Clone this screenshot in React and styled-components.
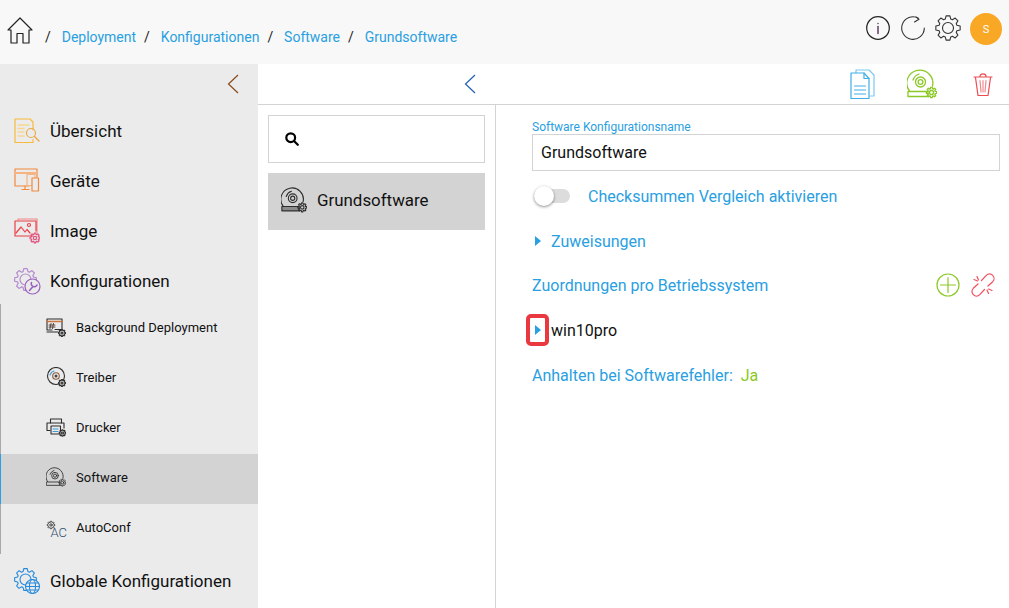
import styled, { createGlobalStyle } from "styled-components";

const BLUE = "#29a0e1";
const LINE = "#d3d3d3";

const GlobalStyle = createGlobalStyle`
  html, body {
    margin: 0;
    padding: 0;
    height: 100%;
    overflow: hidden;
    background: #fff;
    font-family: Roboto, "Liberation Sans", sans-serif;
  }
  #root { height: 100%; }
  * { box-sizing: border-box; }
`;

// cog outline used all over the icon set
function gearPath(cx, cy, ro, ri, teeth) {
  const pts = [];
  const step = (Math.PI * 2) / teeth;
  for (let i = 0; i < teeth; i++) {
    const a = i * step - Math.PI / 2;
    const w = step * 0.2;
    const p = [
      [ri, a - step / 2 + w * 0.6],
      [ro, a - w],
      [ro, a + w],
      [ri, a + step / 2 - w * 0.6],
    ];
    p.forEach(([r, t]) => pts.push(`${(cx + r * Math.cos(t)).toFixed(2)} ${(cy + r * Math.sin(t)).toFixed(2)}`));
  }
  return `M${pts.join("L")}Z`;
}

const Icon = ({ size = 26, h, color = "#333", width = 1, children }) => (
  <svg width={size} height={h || size} viewBox={`0 0 ${size} ${h || size}`} fill="none" stroke={color} strokeWidth={width} strokeLinejoin="round" strokeLinecap="round">
    {children}
  </svg>
);

const HomeIcon = () => (
  <Icon size={26} h={28} color="#222" width={1.2}>
    <path d="M1 13 13 1l12 12h-3v13h-6v-9.500h-6V26H4V13Z" />
  </Icon>
);

const InfoIcon = () => (
  <Icon size={24} color="#222" width={1.2}>
    <circle cx="12" cy="12" r="11.300" />
    <path d="M12 10.500v7" strokeWidth="1.300" stroke="#4a1f4f" />
    <circle cx="12" cy="7.500" r=".7" fill="#333" stroke="none" />
  </Icon>
);

const RefreshIcon = () => (
  <Icon size={24} color="#333" width={1.1}>
    <path d="M17.500 2.200A11.300 11.300 0 1 0 23.300 12" />
    <path d="M13.500 6 18 3.300 15 .8" />
  </Icon>
);

const GearIcon = () => (
  <Icon size={26} color="#333" width={1.1}>
    <path d={gearPath(13, 13, 12.300, 9.300, 8)} />
    <circle cx="13" cy="13" r="5.500" />
  </Icon>
);

const DocsIcon = () => (
  <Icon size={26} h={31} color="#3fade8" width={1.2}>
    <path d="M6 4V1h13l5 5v21h-4" stroke="#7cc8f0" />
    <path d="M1 4h13l5 5.500V29.500H1Z" />
    <path d="M14 4v5.500h5" />
    <path d="M4.500 17h11M4.500 21h11M4.500 25h11" />
  </Icon>
);

const DiscIcon = ({ color, gearColor, barFill = "none", size = 30 }) => (
  <svg width={size} height={size} viewBox="0 0 30 30" fill="none" stroke={color} strokeWidth="1.300" strokeLinecap="round" strokeLinejoin="round">
    <path d="M2.500 22A13 13 0 1 1 25.500 17" />
    <path d="M6 11a9.500 9.500 0 0 1 6-6" />
    <circle cx="13.500" cy="13" r="5" />
    <circle cx="13.500" cy="13" r="2.400" />
    <rect x="1" y="22.500" width="20" height="5" fill={barFill} />
    <path d={gearPath(24.500, 23.500, 5.200, 3.800, 8)} stroke={gearColor || color} />
    <circle cx="24.500" cy="23.500" r="2" stroke={gearColor || color} />
  </svg>
);

const TrashIcon = () => (
  <Icon size={20} h={26} color="#ee4a52" width={1.2}>
    <path d="M1 6h18M7 5.500C7 2 13 2 13 5.500" />
    <path d="M2.500 6.500 5 24.500h10l2.500-18" />
    <path d="M7 9.500 8 21M10 9.500V21M13 9.500 12 21" stroke="#f08a90" />
  </Icon>
);

const PlusCircleIcon = () => (
  <Icon size={24} color="#8cc927" width={1.2}>
    <circle cx="12" cy="12" r="11" />
    <path d="M12 4.500v15M4.500 12h15" />
  </Icon>
);

const UnlinkIcon = () => (
  <Icon size={24} color="#f0505e" width={1.2}>
    <path d="M10.500 7.500 15.300 2.300A4.500 4.500 0 0 1 21.700 8.700L17 13" />
    <path d="M13.500 16.500 8.700 21.700A4.500 4.500 0 0 1 2.300 15.300L7 11" />
    <path d="M6 3.500 7.500 7M3 6.500 6.500 8M17.500 20.500 16 17M21 17.500 17.500 16" />
  </Icon>
);

const OverviewIcon = () => (
  <Icon size={26} color="#f9b93a" width={1.2}>
    <path d="M1 1h15l3 3v8M19 21.500v3H1V1" />
    <path d="M4 7h11M4 10.500h6M4 14h6M4 18h6" stroke="#f9d78f" strokeWidth="1.500" />
    <circle cx="17" cy="15" r="4.500" stroke="#e8ab48" />
    <path d="m20.500 18.500 4.500 4.500" stroke="#e8ab48" strokeWidth="1.400" />
  </Icon>
);

const DevicesIcon = () => (
  <Icon size={26} color="#f2893c" width={1.2}>
    <path d="M15 18H1V1h22v8" />
    <path d="M1 5h22" strokeWidth="1.800" stroke="#f6b483" />
    <path d="M8 21.500h7M11 18v3" />
    <rect x="13" y="6.500" width="8" height="11" stroke="#f6b483" />
    <rect x="18" y="10" width="6.500" height="13" fill="#ebebeb" />
  </Icon>
);

const ImageIcon = () => (
  <Icon size={26} color="#ec3f45" width={1.2}>
    <path d="M4 2V1h19v14" stroke="#f08a8e" />
    <path d="M19 18H1V3h21v10" />
    <path d="m2 15 5-6 4 5 2-2.500 3 3.500" />
    <circle cx="15" cy="7" r="1.500" />
    <path d={gearPath(21, 20, 5, 3.600, 8)} stroke="#e0527d" />
    <circle cx="21" cy="20" r="1.600" stroke="#e0527d" />
  </Icon>
);

const ConfigIcon = () => (
  <Icon size={27} color="#9a62bd" width={1.2}>
    <path d={gearPath(11.500, 11.500, 11, 8.300, 8)} stroke="#b58cce" />
    <circle cx="11.500" cy="11.500" r="5.500" stroke="#b58cce" />
    <circle cx="18.500" cy="18.500" r="7.500" fill="#ebebeb" />
    <path d="M15.500 22.500 19 18.500M17.500 14.500a3 3 0 0 0 1.500 4 3 3 0 0 0 4-1.500" strokeWidth="1.600" />
  </Icon>
);

const GlobalIcon = () => (
  <Icon size={27} color="#2389dc" width={1.1}>
    <path d={gearPath(11.500, 11.500, 11, 8.300, 8)} />
    <circle cx="11.500" cy="11.500" r="5.500" />
    <circle cx="18.500" cy="18.500" r="7" fill="#ebebeb" />
    <ellipse cx="18.500" cy="18.500" rx="3" ry="7" />
    <path d="M11.500 18.500h14M12.500 15h12M12.500 22h12" />
  </Icon>
);

const BackgroundIcon = () => (
  <Icon size={20} color="#2e2e2e" width={1.1}>
    <path d="M1 2h15v10.500H9M1 2v11h5" />
    <path d="M1 4.500h15" strokeWidth="1.600" stroke="#c9763f" />
    <path d="M5 6.500 4 11.500M7.500 6.500l-1 5M3 8h6M3 10h6" stroke="#5a4a40" />
    <path d="M1 15h11" />
    <path d={gearPath(16, 16, 3.500, 2.500, 8)} />
    <circle cx="16" cy="16" r="1" />
  </Icon>
);

const DriverIcon = () => (
  <Icon size={20} color="#2e2e2e" width={1.1}>
    <circle cx="10" cy="9" r="8.500" />
    <path d="M4 8a6 6 0 0 1 4-4" stroke="#3d9ad6" />
    <circle cx="10" cy="9" r="3.300" stroke="#8a5a3a" />
    <circle cx="10" cy="9" r="1.500" fill="#444" stroke="none" />
    <path d={gearPath(16, 16, 3.500, 2.500, 8)} fill="#ebebeb" />
    <circle cx="16" cy="16" r="1" />
  </Icon>
);

const PrinterIcon = () => (
  <Icon size={20} color="#2e2e2e" width={1.1}>
    <path d="M4.500 6V2h11v4" />
    <path d="M4 13.500H1V6h17v5" />
    <path d="M5 9h9.500v8H5Z" fill="#ebebeb" />
    <path d="M7 12h5M7 14.500h5" stroke="#3d9ad6" />
    <path d={gearPath(16.500, 16, 3.300, 2.400, 8)} fill="#ebebeb" />
    <circle cx="16.500" cy="16" r="1" />
  </Icon>
);

const AutoConfIcon = () => (
  <Icon size={24} h={28} color="#444">
    <path d={gearPath(5, 12, 3.800, 2.800, 8)} />
    <circle cx="5" cy="12" r="1.200" />
    <text x="4.500" y="23.500" fontFamily="Roboto" fontSize="13" fontWeight="300" fill="#2f4f6d" stroke="none">AC</text>
  </Icon>
);

const SearchGlyph = () => (
  <svg width="14" height="14" viewBox="0 0 14 14" fill="none" stroke="#000" strokeWidth="2.200" strokeLinecap="round">
    <circle cx="5.700" cy="5.700" r="4.400" />
    <path d="m9 9 3.800 3.800" />
  </svg>
);

const Chevron = ({ color }) => (
  <svg width="12" height="20" viewBox="0 0 12 20" fill="none" stroke={color} strokeWidth="1.200">
    <path d="M11 1 1.500 10 11 19" />
  </svg>
);

const App = () => (
  <Page>
    <GlobalStyle />
    <Header>
      <HomeLink><HomeIcon /></HomeLink>
      <Crumbs>
        {["Deployment", "Konfigurationen", "Software", "Grundsoftware"].map((c) => (
          <Crumb key={c}><Slash>/</Slash><a>{c}</a></Crumb>
        ))}
      </Crumbs>
      <HeaderTools>
        <InfoIcon />
        <RefreshIcon />
        <GearSlot><GearIcon /></GearSlot>
        <Avatar>S</Avatar>
      </HeaderTools>
    </Header>
    <Body>
      <Sidebar>
        <CollapseRow><Chevron color="#8a4a1a" /></CollapseRow>
        <NavItem><IconSlot><OverviewIcon /></IconSlot>Übersicht</NavItem>
        <NavItem><IconSlot><DevicesIcon /></IconSlot>Geräte</NavItem>
        <NavItem><IconSlot><ImageIcon /></IconSlot>Image</NavItem>
        <NavItem><IconSlot><ConfigIcon /></IconSlot>Konfigurationen</NavItem>
        <SubList>
          <SubItem><BackgroundIcon />Background Deployment</SubItem>
          <SubItem><DriverIcon />Treiber</SubItem>
          <SubItem><PrinterIcon />Drucker</SubItem>
          <SubItem $active><DiscIcon color="#2e2e2e" size={20} />Software</SubItem>
          <SubItem><AutoConfSlot><AutoConfIcon /></AutoConfSlot>AutoConf</SubItem>
        </SubList>
        <NavItem><IconSlot><GlobalIcon /></IconSlot>Globale Konfigurationen</NavItem>
      </Sidebar>
      <Main>
        <Toolbar>
          <Chevron color="#1f5fb4" />
          <ToolbarActions>
            <DocsIcon />
            <DiscIcon color="#8cc927" />
            <TrashSlot><TrashIcon /></TrashSlot>
          </ToolbarActions>
        </Toolbar>
        <Columns>
          <ListPanel>
            <SearchBox><SearchGlyph /></SearchBox>
            <ListEntry>
              <DiscIcon color="#2e2e2e" barFill="#8c8c8c" size={26} />
              Grundsoftware
            </ListEntry>
          </ListPanel>
          <Detail>
            <FieldLabel>Software Konfigurationsname</FieldLabel>
            <NameInput>Grundsoftware</NameInput>
            <ToggleRow>
              <Toggle />
              <BlueText>Checksummen Vergleich aktivieren</BlueText>
            </ToggleRow>
            <ExpandRow>
              <Arrow />
              <BlueText>Zuweisungen</BlueText>
            </ExpandRow>
            <HeadingRow>
              <BlueText>Zuordnungen pro Betriebssystem</BlueText>
              <HeadingTools>
                <PlusCircleIcon />
                <UnlinkIcon />
              </HeadingTools>
            </HeadingRow>
            <OsRow>
              <Marker><Arrow /></Marker>
              win10pro
            </OsRow>
            <StatusRow>
              <BlueText>Anhalten bei Softwarefehler:</BlueText>
              <YesText>Ja</YesText>
            </StatusRow>
          </Detail>
        </Columns>
      </Main>
    </Body>
  </Page>
);

export default App;

const Page = styled.div`
  display: flex;
  flex-direction: column;
  height: 608px;
  overflow: hidden;
`;

const Header = styled.header`
  height: 64px;
  flex: none;
  display: flex;
  align-items: center;
  background: #f8f8f8;
  padding-left: 7px;
`;

const HomeLink = styled.a`
  display: flex;
  margin-top: -2px;
`;

const Crumbs = styled.nav`
  display: flex;
  align-items: center;
  gap: 8px;
  margin-left: 12px;
  margin-top: 10px;
  font-size: 14px;
  color: ${BLUE};
`;

const Crumb = styled.span`
  display: flex;
  align-items: center;
`;

const Slash = styled.span`
  color: #222;
  width: 16.700px;
`;

const HeaderTools = styled.div`
  margin-left: auto;
  display: flex;
  align-items: center;
  gap: 11px;
  padding: 0 7px 8px 0;
`;

const GearSlot = styled.span`
  display: flex;
  margin-left: -1px;
`;

const Avatar = styled.div`
  width: 32px;
  height: 32px;
  border-radius: 50%;
  background: #f9a825;
  color: #fff;
  font-size: 11px;
  display: flex;
  align-items: center;
  justify-content: center;
  margin-top: 2px;
  margin-left: -2px;
`;

const Body = styled.div`
  flex: 1;
  display: flex;
  min-height: 0;
`;

const Sidebar = styled.aside`
  width: 258px;
  flex: none;
  background: #ebebeb;
  display: flex;
  flex-direction: column;
`;

const CollapseRow = styled.div`
  height: 42px;
  flex: none;
  display: flex;
  align-items: center;
  justify-content: flex-end;
  padding-right: 19px;
  padding-bottom: 2px;
`;

const NavItem = styled.div`
  height: 50px;
  flex: none;
  display: flex;
  align-items: center;
  font-size: 17px;
  color: #111;
`;

const IconSlot = styled.span`
  width: 50px;
  flex: none;
  display: flex;
  justify-content: center;
  padding: 0 6px 0 10px;
`;

const SubList = styled.div`
  margin-top: -2px;
  margin-bottom: 2px;
  border-left: 1px solid #a9a9a9;
`;

const SubItem = styled.div`
  height: 50px;
  display: flex;
  align-items: center;
  gap: 10px;
  padding: 0 0 4px 45px;
  font-size: 13px;
  color: #111;
  background: ${(p) => (p.$active ? "#d3d3d3" : "transparent")};
  box-shadow: ${(p) => (p.$active ? `-1px 0 0 ${BLUE}` : "none")};
`;

const AutoConfSlot = styled.span`
  display: flex;
  margin-right: -4px;
`;

const Main = styled.main`
  flex: 1;
  min-width: 0;
  display: flex;
  flex-direction: column;
`;

const Toolbar = styled.div`
  height: 41px;
  flex: none;
  display: flex;
  align-items: center;
  padding-left: 206px;
  border-bottom: 1px solid ${LINE};
`;

const ToolbarActions = styled.div`
  margin-left: auto;
  display: flex;
  align-items: center;
  gap: 31px;
  padding-right: 16px;
`;

const TrashSlot = styled.span`
  display: flex;
  margin-left: 5px;
`;

const Columns = styled.div`
  flex: 1;
  display: flex;
  min-height: 0;
`;

const ListPanel = styled.div`
  width: 238px;
  flex: none;
  padding: 10px 10px 0;
  border-right: 1px solid ${LINE};
`;

const SearchBox = styled.div`
  height: 48px;
  border: 1px solid ${LINE};
  display: flex;
  align-items: center;
  padding-left: 16px;
`;

const ListEntry = styled.div`
  height: 57px;
  margin-top: 10px;
  background: ${LINE};
  display: flex;
  align-items: center;
  gap: 10px;
  padding: 0 0 3px 13px;
  font-size: 16.900px;
  color: #111;
`;

const Detail = styled.div`
  flex: 1;
  padding: 16px 9px 0 36px;
`;

const FieldLabel = styled.div`
  font-size: 12px;
  line-height: 13px;
  color: ${BLUE};
`;

const NameInput = styled.div`
  height: 37px;
  border: 1px solid ${LINE};
  display: flex;
  align-items: center;
  padding-left: 8px;
  font-size: 16px;
  color: #111;
`;

const BlueText = styled.span`
  font-size: 16px;
  color: ${BLUE};
`;

const ToggleRow = styled.div`
  height: 26px;
  margin-top: 12px;
  display: flex;
  align-items: center;
  gap: 18px;
  padding-left: 2px;
`;

const Toggle = styled.span`
  position: relative;
  width: 36px;
  height: 14px;
  border-radius: 7px;
  background: #dcdcdc;
  &::before {
    content: "";
    position: absolute;
    left: 0;
    top: -3px;
    width: 20px;
    height: 20px;
    border-radius: 50%;
    background: #fff;
    box-shadow: 0 1px 3px rgba(0, 0, 0, 0.45);
  }
`;

const ExpandRow = styled.div`
  height: 24px;
  margin-top: 20px;
  display: flex;
  align-items: center;
  gap: 10px;
  padding-left: 3px;
`;

const Arrow = styled.span`
  width: 0;
  height: 0;
  border-style: solid;
  border-width: 5px 0 5px 6px;
  border-color: transparent transparent transparent ${BLUE};
`;

const HeadingRow = styled.div`
  height: 26px;
  margin-top: 19px;
  display: flex;
  align-items: center;
  justify-content: space-between;
  padding-right: 5px;
`;

const HeadingTools = styled.div`
  display: flex;
  align-items: center;
  gap: 11px;
`;

const OsRow = styled.div`
  height: 32px;
  margin: 16px 0 0 -6px;
  display: flex;
  align-items: center;
  gap: 2px;
  font-size: 16px;
  color: #111;
`;

const Marker = styled.span`
  width: 23px;
  height: 32px;
  border: 4px solid #e9383f;
  border-radius: 5px;
  display: flex;
  align-items: center;
  justify-content: center;
`;

const StatusRow = styled.div`
  height: 24px;
  margin-top: 17px;
  display: flex;
  align-items: center;
  gap: 8px;
`;

const YesText = styled.span`
  font-size: 16px;
  color: #8cc927;
`;
